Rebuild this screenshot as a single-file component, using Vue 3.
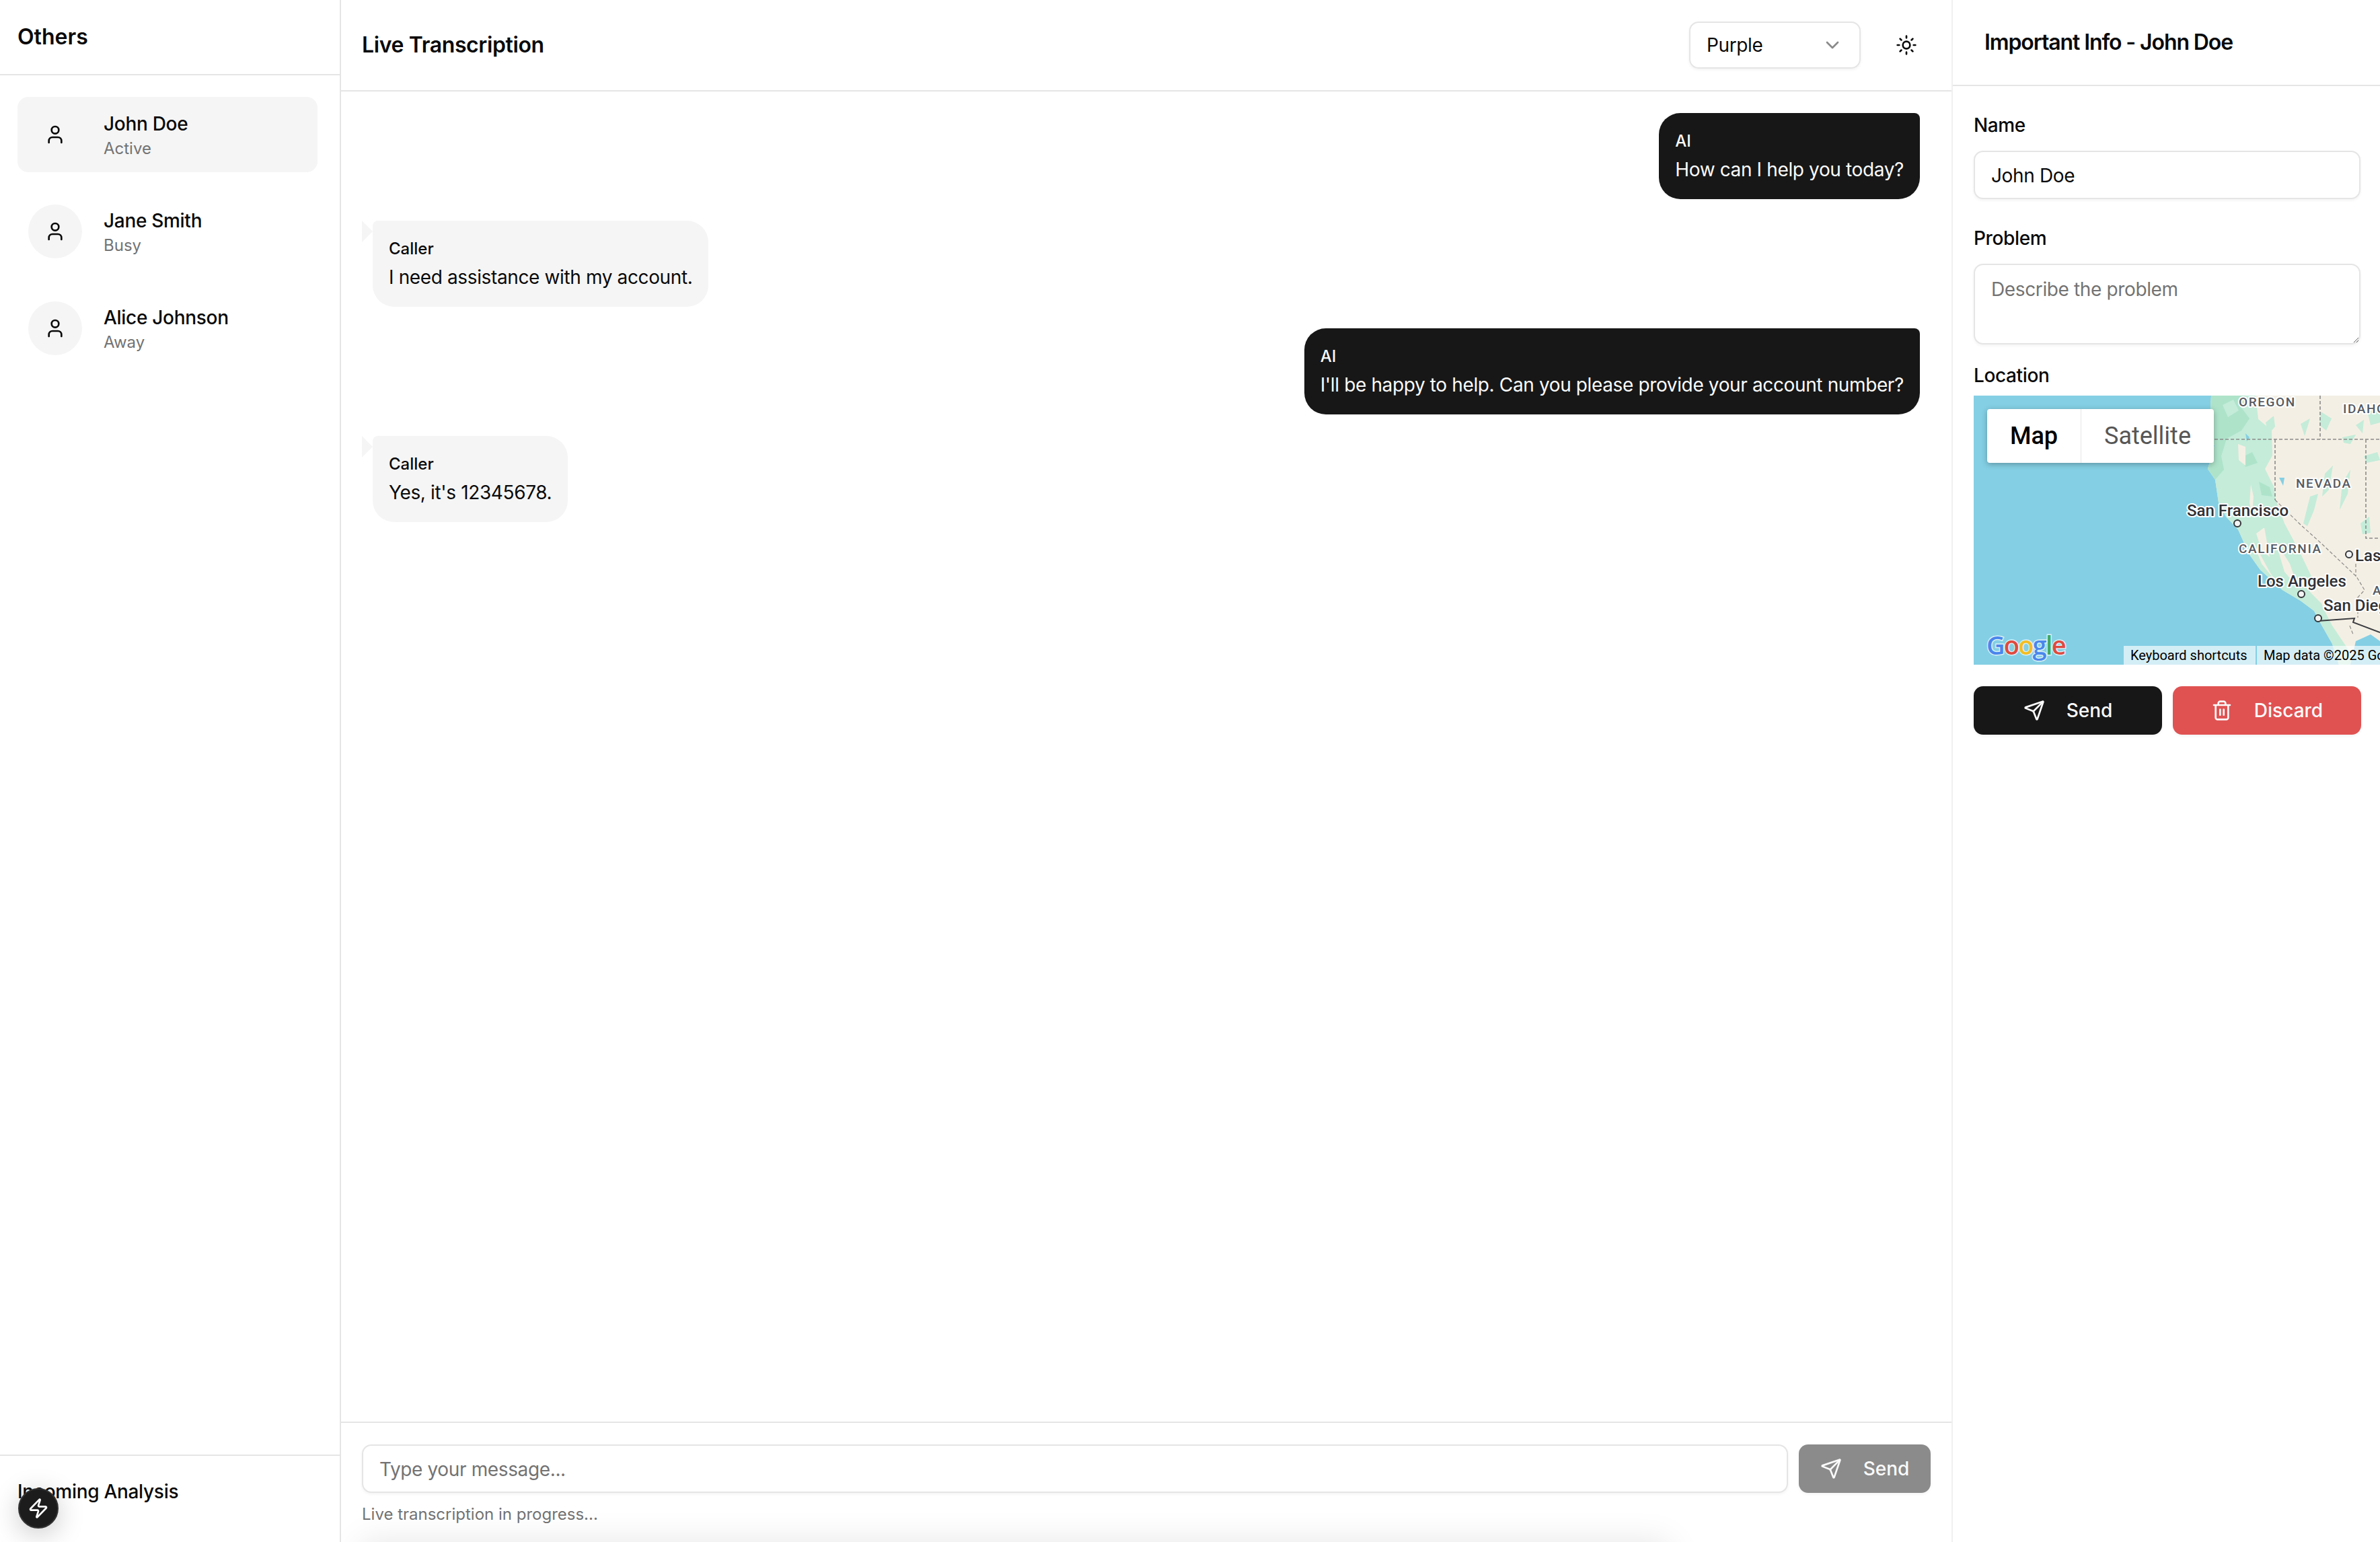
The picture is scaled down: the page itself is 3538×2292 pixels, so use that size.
<script setup>
import { ref } from "vue"

const contacts = ref([
  { name: "John Doe", status: "Active", active: true },
  { name: "Jane Smith", status: "Busy", active: false },
  { name: "Alice Johnson", status: "Away", active: false },
])

const messages = ref([
  { from: "AI", text: "How can I help you today?" },
  { from: "Caller", text: "I need assistance with my account." },
  { from: "AI", text: "I'll be happy to help. Can you please provide your account number?" },
  { from: "Caller", text: "Yes, it's 12345678." },
])

const callerName = ref("John Doe")
const problem = ref("")
const draft = ref("")

// state names on the map
const regions = [
  { t: "OREGON", x: 394, y: 16 },
  { t: "IDAHO", x: 549, y: 26 },
  { t: "NEVADA", x: 479, y: 137 },
  { t: "CALIFORNIA", x: 394, y: 234 },
  { t: "A", x: 593, y: 296 },
]
const cities = [
  { t: "San Francisco", x: 317, y: 179 },
  { t: "Las", x: 567, y: 246 },
  { t: "Los Angeles", x: 422, y: 284 },
  { t: "San Diego", x: 520, y: 320 },
]
const markers = [
  [392, 190],
  [558, 236],
  [487, 295],
  [512, 331],
]
const patches = [
  "434,40 446,30 448,46 438,58",
  "486,42 500,34 492,60",
  "516,24 532,34 524,52 514,44",
  "548,62 568,58 560,72 550,70",
  "585,22 604,16 604,40 590,44",
  "522,116 534,104 528,140 518,150",
  "490,190 500,150 512,146 506,170 496,194",
  "548,130 560,110 556,146 544,170",
  "580,90 600,84 604,96 584,100",
  "575,190 588,180 590,204 578,206",
  "568,44 580,36 578,56",
]
const streaks = [
  "393,72 404,76 404,104 394,96",
  "412,132 416,150 414,176 410,160",
  "420,205 432,196 440,240 428,230",
  "448,215 470,250 482,285 462,262",
  "414,214 440,262 452,280 428,250",
  "495,270 512,290 520,312 500,292",
]
</script>

<template>
  <main class="app">
    <aside class="others">
      <header class="others-head">Others</header>
      <ul class="contact-list">
        <li v-for="c in contacts" :key="c.name" class="contact" :class="{ current: c.active }">
          <span class="avatar">
            <svg class="ico" viewBox="0 0 24 24">
              <path d="M19 21v-2a4 4 0 0 0-4-4H9a4 4 0 0 0-4 4v2" />
              <circle cx="12" cy="7" r="4" />
            </svg>
          </span>
          <div>
            <div class="contact-name">{{ c.name }}</div>
            <div class="contact-status">{{ c.status }}</div>
          </div>
        </li>
      </ul>
      <footer class="others-foot">Incoming Analysis</footer>
      <button class="fab" aria-label="Quick action">
        <svg class="ico" viewBox="0 0 24 24">
          <path d="M4 14a1 1 0 0 1-.78-1.63l9.9-10.2a.5.5 0 0 1 .86.46l-1.92 6.02A1 1 0 0 0 13 10h7a1 1 0 0 1 .78 1.63l-9.9 10.2a.5.5 0 0 1-.86-.46l1.92-6.02A1 1 0 0 0 11 14z" />
        </svg>
      </button>
    </aside>

    <section class="chat">
      <header class="chat-head">
        <h1>Live Transcription</h1>
        <div class="chat-tools">
          <div class="select">
            <span>Purple</span>
            <svg class="ico chevron" viewBox="0 0 24 24"><path d="m6 9 6 6 6-6" /></svg>
          </div>
          <button class="theme" aria-label="Toggle theme">
            <svg class="ico" viewBox="0 0 24 24">
              <circle cx="12" cy="12" r="4" />
              <path d="M12 2v2M12 20v2M4.93 4.93l1.41 1.41M17.66 17.66l1.41 1.41M2 12h2M20 12h2M6.34 17.66l-1.41 1.41M19.07 4.93l-1.41 1.41" />
            </svg>
          </button>
        </div>
      </header>

      <div class="messages">
        <div v-for="m in messages" :key="m.text" class="bubble" :class="m.from === 'AI' ? 'ai' : 'caller'">
          <div class="who">{{ m.from }}</div>
          <div class="said">{{ m.text }}</div>
        </div>
      </div>

      <footer class="composer">
        <div class="composer-row">
          <input v-model="draft" class="field" type="text" placeholder="Type your message..." />
          <button class="btn btn-muted">
            <svg class="ico" viewBox="0 0 24 24">
              <path d="M14.536 21.686a.5.5 0 0 0 .937-.024l6.5-19a.496.496 0 0 0-.635-.635l-19 6.5a.5.5 0 0 0-.024.937l7.93 3.18a2 2 0 0 1 1.112 1.11z" />
              <path d="m21.854 2.147-10.94 10.939" />
            </svg>
            Send
          </button>
        </div>
        <p class="hint">Live transcription in progress...</p>
      </footer>
      <div class="glow"></div>
    </section>

    <aside class="info">
      <header class="info-head">Important Info - John Doe</header>
      <form class="info-form" @submit.prevent>
        <label class="lbl lbl-name">Name</label>
        <input v-model="callerName" class="field" type="text" />
        <label class="lbl lbl-problem">Problem</label>
        <textarea v-model="problem" class="field area" placeholder="Describe the problem"></textarea>
        <label class="lbl lbl-location">Location</label>

        <div class="map">
          <svg class="map-art" viewBox="0 0 604 400" width="604" height="400">
            <rect width="604" height="400" fill="#84cfe4" />
            <polygon fill="#f4efe4" points="353,0 351,42 358,75 348,109 359,125 364,159 375,180 393,199 409,235 426,259 459,289 486,305 506,320 516,339 533,369 543,400 604,400 604,0" />
            <polygon fill="#c4ecd9" points="353,0 351,42 358,75 348,109 359,125 364,159 375,180 393,199 409,235 426,259 459,289 486,305 506,320 516,339 533,369 543,400 572,400 533,342 519,315 513,292 486,235 462,190 449,155 446,135 433,109 444,89 443,52 423,35 419,0" />
            <polygon fill="#aee3ca" points="353,0 351,42 358,75 348,109 359,125 372,110 368,90 376,64 398,52 410,34 398,18 404,0" />
            <polygon fill="#c4ecd9" points="370,14 386,6 394,22 378,32" />
            <polygon fill="#aee3ca" points="398,92 414,84 422,100 404,106" />
            <polygon fill="#aee3ca" points="424,128 440,136 444,150 428,148" />
            <polygon fill="#f4efe4" points="488,0 515,0 515,8 498,12" />
            <polygon v-for="p in streaks" :key="p" fill="#f4efe4" :points="p" />
            <polygon v-for="p in patches" :key="p" fill="#c4ecd9" :points="p" />
            <polygon fill="#84cfe4" points="560,400 568,365 590,355 604,365 604,400" />
            <polygon fill="#84cfe4" points="404,56 410,62 406,68" />
            <polygon fill="#84cfe4" points="454,122 462,122 460,134" />

            <g fill="none" stroke="#8b8b8b" stroke-width="1.6" stroke-dasharray="5 3">
              <path d="M358 65H604M515 0V65M583 65V212H604M448 65V155" />
              <path d="M448 155L486 192L516 219L569 269L581 289L571 300V330M568 242V269M559 342L564 355" stroke-width="1.2" />
            </g>
            <path d="M512 335L566 331L564 337L604 352" fill="none" stroke="#3a3c40" stroke-width="2" />

            <text v-for="r in regions" :key="r.t" class="region" :x="r.x" :y="r.y">{{ r.t }}</text>
            <text v-for="c in cities" :key="c.t" class="city" :x="c.x" :y="c.y">{{ c.t }}</text>
            <circle v-for="m in markers" :key="m[0]" :cx="m[0]" :cy="m[1]" r="5" fill="#f4f4f4" stroke="#33363a" stroke-width="2" />
            <text class="google" x="19" y="385"><tspan fill="#4a86ec">G</tspan><tspan fill="#e04a3e">o</tspan><tspan fill="#f4bd22">o</tspan><tspan fill="#4a86ec">g</tspan><tspan fill="#3fa95f">l</tspan><tspan fill="#e04a3e">e</tspan></text>
          </svg>

          <div class="map-type">
            <span class="map-tab on">Map</span>
            <span class="map-tab">Satellite</span>
          </div>
          <div class="attrib attrib-keys">Keyboard shortcuts</div>
          <div class="attrib attrib-data">Map data ©2025 Google</div>
        </div>

        <div class="actions">
          <button class="btn btn-dark">
            <svg class="ico" viewBox="0 0 24 24">
              <path d="M14.536 21.686a.5.5 0 0 0 .937-.024l6.5-19a.496.496 0 0 0-.635-.635l-19 6.5a.5.5 0 0 0-.024.937l7.93 3.18a2 2 0 0 1 1.112 1.11z" />
              <path d="m21.854 2.147-10.94 10.939" />
            </svg>
            Send
          </button>
          <button class="btn btn-red">
            <svg class="ico" viewBox="0 0 24 24">
              <path d="M3 6h18M19 6v14c0 1-1 2-2 2H7c-1 0-2-1-2-2V6M8 6V4c0-1 1-2 2-2h4c1 0 2 1 2 2v2M10 11v6M14 11v6" />
            </svg>
            Discard
          </button>
        </div>
      </form>
    </aside>
  </main>
</template>

<style>
html,
body {
  overflow: hidden;
  background: #fff;
}
</style>

<style scoped>
.app {
  display: flex;
  width: 100vw;
  height: 100vh;
  font-family: Inter, "Liberation Sans", sans-serif;
  font-size: 28px;
  line-height: 40px;
  letter-spacing: -0.37px;
  color: #0a0a0a;
  background: #fff;
}

.ico {
  width: 32px;
  height: 32px;
  flex: none;
  fill: none;
  stroke: currentColor;
  stroke-width: 2;
  stroke-linecap: round;
  stroke-linejoin: round;
}

button {
  font-family: inherit;
  border: none;
  padding: 0;
  background: none;
  color: inherit;
}

/* left column */
.others {
  position: relative;
  width: 507px;
  flex: none;
  display: flex;
  flex-direction: column;
  box-sizing: border-box;
  border-right: 2px solid #e5e5e5;
}

.others-head {
  height: 110px;
  box-sizing: content-box;
  display: flex;
  align-items: center;
  padding-left: 26px;
  font-size: 32px;
  font-weight: 600;
  letter-spacing: 0;
  border-bottom: 2px solid #e5e5e5;
}

.contact-list {
  flex: 1;
  list-style: none;
  margin: 0;
  padding: 32px 33px 0 26px;
  display: flex;
  flex-direction: column;
  gap: 32px;
}

.contact {
  display: flex;
  align-items: center;
  gap: 32px;
  padding: 16px;
  border-radius: 16px;
}

.contact.current {
  background: #f5f5f5;
}

.avatar {
  width: 80px;
  height: 80px;
  flex: none;
  display: flex;
  align-items: center;
  justify-content: center;
  border-radius: 50%;
  background: #f5f5f5;
}

.contact-name {
  font-weight: 450;
  letter-spacing: -0.3px;
}

.contact-status {
  margin-top: 2px;
  font-size: 24px;
  line-height: 30px;
  letter-spacing: 0;
  color: #737373;
}

.others-foot {
  height: 130px;
  box-sizing: border-box;
  padding: 33px 0 0 26px;
  font-weight: 450;
  letter-spacing: -0.3px;
  border-top: 2px solid #e5e5e5;
}

.fab {
  position: absolute;
  left: 27px;
  bottom: 20px;
  width: 60px;
  height: 60px;
  display: flex;
  align-items: center;
  justify-content: center;
  border-radius: 50%;
  background: #1c1c1c;
  border: 2px solid #333;
  box-sizing: border-box;
  color: #fff;
  box-shadow: 0 8px 40px rgba(0, 0, 0, 0.22);
}

/* middle column */
.chat {
  position: relative;
  flex: 1;
  min-width: 0;
  display: flex;
  flex-direction: column;
  overflow: hidden;
}

.chat-head {
  height: 134px;
  flex: none;
  display: flex;
  align-items: center;
  justify-content: space-between;
  padding: 0 31px;
  border-bottom: 2px solid #e5e5e5;
}

.chat-head h1 {
  margin: 0;
  font-size: 32px;
  font-weight: 600;
  letter-spacing: -0.38px;
}

.chat-tools {
  display: flex;
  align-items: center;
  gap: 32px;
}

.select {
  width: 255px;
  height: 70px;
  box-sizing: border-box;
  display: flex;
  align-items: center;
  justify-content: space-between;
  padding: 0 24px;
  border: 2px solid #e5e5e5;
  border-radius: 14px;
  box-shadow: 0 2px 4px rgba(0, 0, 0, 0.05);
}

.chevron {
  color: #8a8a8a;
}

.theme {
  width: 72px;
  height: 72px;
  display: flex;
  align-items: center;
  justify-content: center;
}

.messages {
  flex: 1;
  display: flex;
  flex-direction: column;
  gap: 32px;
  padding: 32px 47px;
}

.bubble {
  position: relative;
  box-sizing: border-box;
  height: 128px;
  padding: 26px 24px 22px;
  border-radius: 32px;
}

.ai {
  align-self: flex-end;
  background: #171717;
  color: #fafafa;
  border-top-right-radius: 8px;
}

.caller {
  align-self: flex-start;
  background: #f5f5f5;
  border-top-left-radius: 8px;
}

.caller::before {
  content: "";
  position: absolute;
  left: -16px;
  top: 0;
  border-left: 16px solid #f5f5f5;
  border-top: 16px solid transparent;
  border-bottom: 16px solid transparent;
}

.who {
  font-size: 24px;
  line-height: 32px;
  font-weight: 450;
  letter-spacing: 0;
  margin-bottom: 6px;
}

.composer {
  flex: none;
  height: 179px;
  box-sizing: border-box;
  padding: 32px 31px 0;
  border-top: 2px solid #e5e5e5;
}

.composer-row {
  display: flex;
  gap: 16px;
}

.field {
  display: block;
  width: 100%;
  min-width: 0;
  height: 72px;
  box-sizing: border-box;
  padding: 2px 24px 0;
  font-family: inherit;
  font-size: 28px;
  letter-spacing: -0.37px;
  color: #0a0a0a;
  background: #fff;
  border: 2px solid #e5e5e5;
  border-radius: 14px;
  box-shadow: 0 2px 4px rgba(0, 0, 0, 0.05);
  outline: none;
}

.field::placeholder {
  color: #737373;
  opacity: 1;
}

.area {
  height: 120px;
  padding: 16px 24px;
  line-height: 40px;
  resize: vertical;
}

.btn {
  height: 72px;
  display: flex;
  align-items: center;
  justify-content: center;
  gap: 32px;
  font-size: 28px;
  font-weight: 450;
  letter-spacing: 0;
  border-radius: 14px;
  color: #fafafa;
  box-shadow: 0 2px 4px rgba(0, 0, 0, 0.05);
}

.btn-muted {
  flex: none;
  width: 196px;
  background: #8b8b8b;
}

.btn-dark {
  background: #171717;
}

.btn-red {
  background: #e05252;
}

.hint {
  margin: 16px 0 0;
  font-size: 24px;
  line-height: 32px;
  letter-spacing: 0;
  color: #737373;
}

.glow {
  position: absolute;
  left: 30px;
  right: 420px;
  top: 100%;
  height: 60px;
  box-shadow: 0 0 50px rgba(0, 0, 0, 0.1);
}

/* right column */
.info {
  width: 637px;
  flex: none;
  box-sizing: border-box;
  border-left: 2px solid #f0f0f0;
  overflow: hidden;
}

.info-head {
  height: 126px;
  display: flex;
  align-items: center;
  padding-left: 47px;
  font-size: 32px;
  font-weight: 600;
  letter-spacing: -1.1px;
  border-bottom: 2px solid #e5e5e5;
}

.info-form {
  padding: 38px 29px 0 31px;
}

.lbl {
  display: block;
  font-weight: 450;
}

.lbl-name,
.lbl-problem {
  margin-bottom: 18px;
}

.lbl-problem {
  margin-top: 38px;
}

.lbl-location {
  margin-top: 26px;
  margin-bottom: 10px;
}

.map {
  position: relative;
  width: 606px;
  height: 400px;
  overflow: hidden;
  font-family: Roboto, sans-serif;
  letter-spacing: 0;
}

.map-art {
  display: block;
}

.region {
  font-family: Roboto, sans-serif;
  font-size: 19px;
  font-weight: 500;
  letter-spacing: 1.6px;
  fill: #565a61;
  stroke: #fff;
  stroke-width: 4px;
  stroke-linejoin: round;
  paint-order: stroke;
}

.city {
  font-family: Roboto, sans-serif;
  font-size: 24px;
  font-weight: 500;
  fill: #2f3136;
  stroke: #fff;
  stroke-width: 4px;
  stroke-linejoin: round;
  paint-order: stroke;
}

.google {
  font-family: "Open Sans", Roboto, sans-serif;
  font-size: 38px;
  font-weight: 600;
  letter-spacing: -1.8px;
  stroke: #fff;
  stroke-opacity: 0.7;
  stroke-width: 3px;
  paint-order: stroke;
}

.map-type {
  position: absolute;
  left: 20px;
  top: 20px;
  height: 80px;
  display: flex;
  background: #fff;
  border-radius: 4px;
  box-shadow: 0 2px 8px rgba(0, 0, 0, 0.3);
  font-size: 36px;
  line-height: 80px;
}

.map-tab {
  width: 197px;
  text-align: center;
  color: #565656;
}

.map-tab.on {
  width: 139px;
  font-weight: 500;
  color: #000;
  border-right: 1px solid #e6e6e6;
}

.attrib {
  position: absolute;
  bottom: 0;
  height: 28px;
  box-sizing: border-box;
  padding-left: 10px;
  font-size: 20px;
  line-height: 29px;
  color: #000;
  white-space: nowrap;
  background: rgba(255, 255, 255, 0.65);
}

.attrib-keys {
  left: 223px;
  width: 196px;
}

.attrib-data {
  left: 421px;
  width: 185px;
  overflow: hidden;
}

.actions {
  display: grid;
  grid-template-columns: 1fr 1fr;
  gap: 16px;
  width: 576px;
  margin-top: 32px;
}
</style>
